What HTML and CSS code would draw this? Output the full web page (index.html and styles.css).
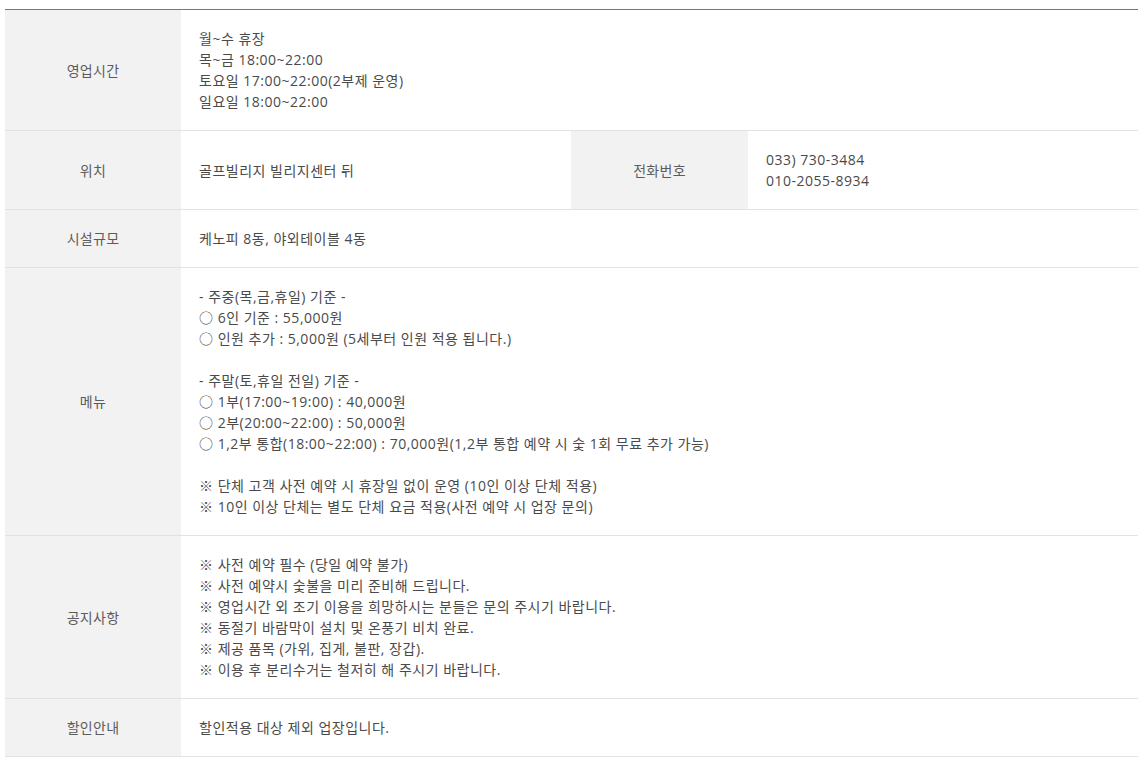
FILE: index.html
```html
<!DOCTYPE html>
<html lang="ko">
<head>
<meta charset="utf-8">
<link rel="stylesheet" href="styles.css">
</head>
<body>
<div class="wrap">
<table class="info">
  <colgroup>
    <col class="c-th"><col class="c-td"><col class="c-th2"><col class="c-td">
  </colgroup>
  <tbody>
    <tr>
      <th>영업시간</th>
      <td colspan="3">월~수 휴장<br>목~금 18:00~22:00<br>토요일 17:00~22:00(2부제 운영)<br>일요일 18:00~22:00</td>
    </tr>
    <tr>
      <th>위치</th>
      <td>골프빌리지 빌리지센터 뒤</td>
      <th>전화번호</th>
      <td>033) 730-3484<br>010-2055-8934</td>
    </tr>
    <tr>
      <th>시설규모</th>
      <td colspan="3">케노피 8동, 야외테이블 4동</td>
    </tr>
    <tr>
      <th>메뉴</th>
      <td colspan="3">- 주중(목,금,휴일) 기준 -<br>○ 6인 기준 : 55,000원<br>○ 인원 추가 : 5,000원 (5세부터 인원 적용 됩니다.)<br><br>- 주말(토,휴일 전일) 기준 -<br>○ 1부(17:00~19:00) : 40,000원<br>○ 2부(20:00~22:00) : 50,000원<br>○ 1,2부 통합(18:00~22:00) : 70,000원(1,2부 통합 예약 시 숯 1회 무료 추가 가능)<br><br>※ 단체 고객 사전 예약 시 휴장일 없이 운영 (10인 이상 단체 적용)<br>※ 10인 이상 단체는 별도 단체 요금 적용(사전 예약 시 업장 문의)</td>
    </tr>
    <tr>
      <th>공지사항</th>
      <td colspan="3">※ 사전 예약 필수 (당일 예약 불가)<br>※ 사전 예약시 숯불을 미리 준비해 드립니다.<br>※ 영업시간 외 조기 이용을 희망하시는 분들은 문의 주시기 바랍니다.<br>※ 동절기 바람막이 설치 및 온풍기 비치 완료.<br>※ 제공 품목 (가위, 집게, 불판, 장갑).<br>※ 이용 후 분리수거는 철저히 해 주시기 바랍니다.</td>
    </tr>
    <tr>
      <th>할인안내</th>
      <td colspan="3">할인적용 대상 제외 업장입니다.</td>
    </tr>
  </tbody>
</table>
</div>
</body>
</html>
```
FILE: styles.css
```css
html, body {
  margin: 0;
  padding: 0;
  background: #fff;
}
.wrap {
  padding: 9px 9px 0 5px;
}
.info {
  width: 1133px;
  border-collapse: collapse;
  table-layout: fixed;
  border-top: 1px solid #777;
  font-family: "Open Sans", "Noto Sans CJK KR", sans-serif;
  font-size: 14px;
  line-height: 21px;
  letter-spacing: 0.5px;
  color: #4a4a4a;
}
.c-th { width: 176px; }
.c-th2 { width: 177px; }
.c-td { width: 390px; }
.info th, .info td {
  border-bottom: 1px solid #e2e2e2;
  padding: 18px;
  vertical-align: middle;
}
.info th {
  background: #f2f2f2;
  font-weight: 400;
  color: #5c5c5c;
  text-align: center;
  letter-spacing: 0.3px;
}
.info td {
  text-align: left;
  font-weight: 400;
}
```
